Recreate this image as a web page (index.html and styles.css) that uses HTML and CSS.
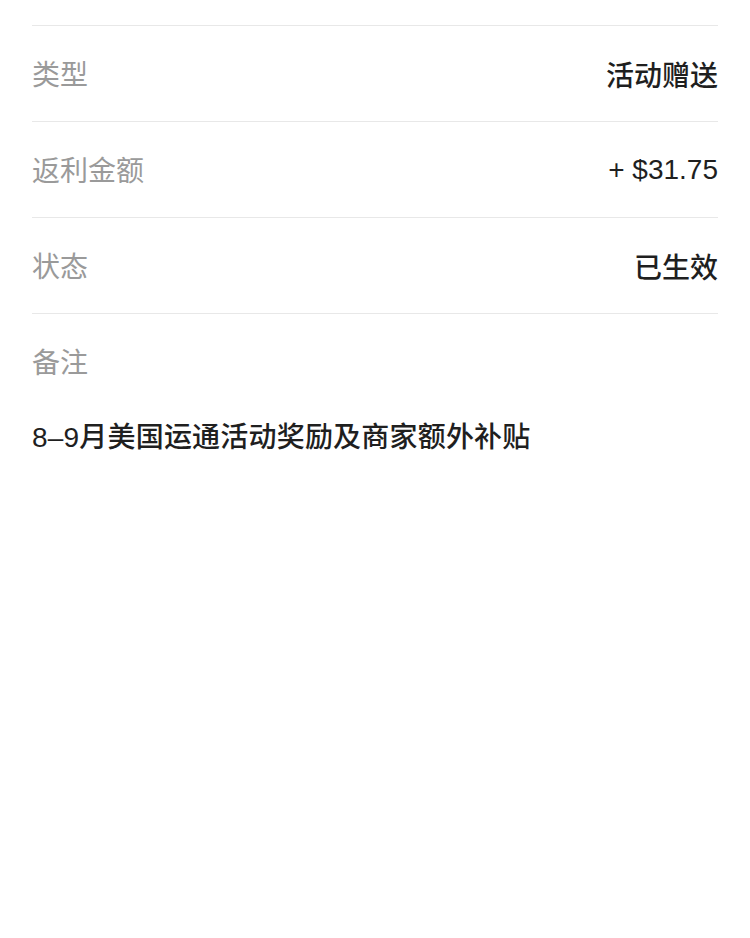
FILE: index.html
```html
<!DOCTYPE html>
<html lang="zh">
<head>
    <meta charset="utf-8">
    <title>返利详情</title>
    <link rel="stylesheet" href="styles.css">
</head>
<body>
    <div class="detail">
        <div class="row">
            <span class="label">类型</span>
            <span class="value">活动赠送</span>
        </div>
        <div class="row">
            <span class="label">返利金额</span>
            <span class="value">+ $31.75</span>
        </div>
        <div class="row">
            <span class="label">状态</span>
            <span class="value">已生效</span>
        </div>
        <div class="remark">
            <div class="row">
                <span class="label">备注</span>
            </div>
            <p class="note">8–9月美国运通活动奖励及商家额外补贴</p>
        </div>
    </div>
</body>
</html>
```

FILE: styles.css
```css
body {
    margin: 0;
    background-color: #fff;
    font-family: "Liberation Sans", "Noto Sans CJK SC", sans-serif;
    color: #222;
}

.detail {
    padding: 25px 32px 0;
}

.row {
    display: flex;
    justify-content: space-between;
    align-items: center;
    height: 96px;
    box-sizing: border-box;
    border-top: 1px solid #e8e8e8;
    font-size: 28px;
}

.label {
    color: #9a9a9a;
    margin-top: -2px;
}

.value {
    color: #1f1f1f;
    font-weight: 500;
}

.note {
    margin: 9px 0 0;
    font-size: 28px;
    line-height: 40px;
    font-weight: 500;
    letter-spacing: 0.2px;
    color: #1f1f1f;
}
```
